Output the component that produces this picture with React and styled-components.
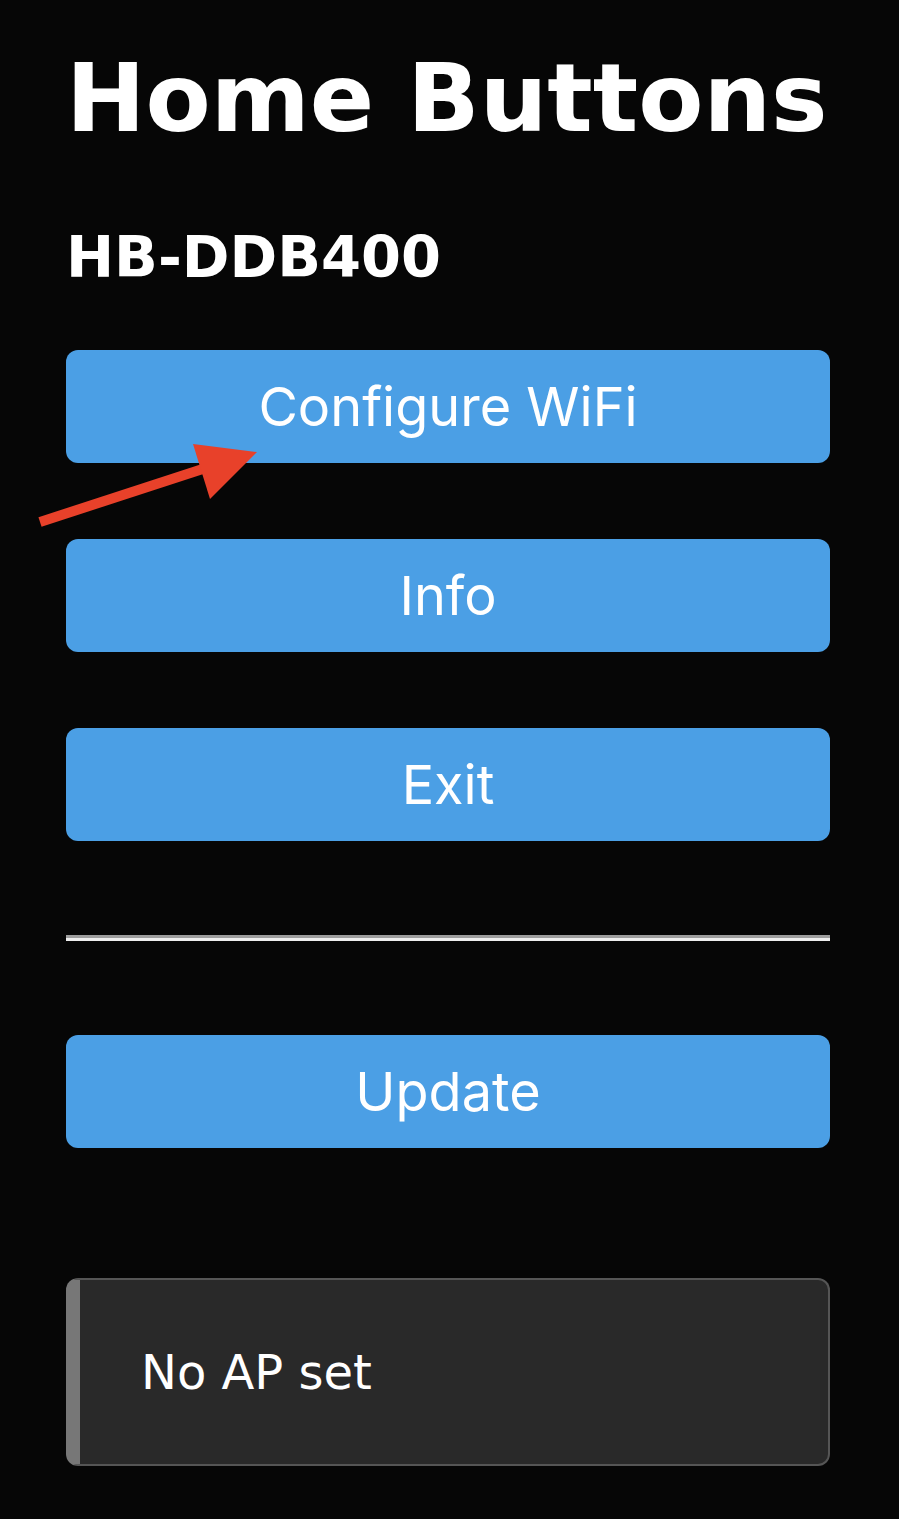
import React from "react";
import styled, { createGlobalStyle } from "styled-components";

const Global = createGlobalStyle`
  html, body { margin: 0; padding: 0; background: #060606; }
  body { font-family: "DejaVu Sans", sans-serif; color: #fff; }
`;

const Page = styled.div`
  position: relative;
  min-height: 1519px;
  padding: 38px 69px 0 66px;
  box-sizing: border-box;
  display: flex;
  flex-direction: column;
`;

const Title = styled.h1`
  margin: 0;
  font-family: "DejaVu Sans", sans-serif;
  font-weight: bold;
  font-size: 95px;
  line-height: 120px;
  white-space: nowrap;
`;

const Subtitle = styled.h2`
  margin: 70px 0 0 0;
  font-family: "DejaVu Sans", sans-serif;
  font-weight: bold;
  font-size: 57.5px;
  line-height: 60px;
`;

const Stack = styled.div`
  display: flex;
  flex-direction: column;
  gap: 76px;
  margin-top: ${(p) => p.$top}px;
`;

const Button = styled.button`
  display: flex;
  align-items: center;
  justify-content: center;
  height: 113px;
  width: 100%;
  border: none;
  border-radius: 12px;
  background: #4b9fe5;
  color: #fff;
  font-family: Inter, "Open Sans", sans-serif;
  font-size: 54px;
  font-weight: 400;
  padding: 0;
`;

const Rule = styled.hr`
  margin: 94px 0 0 0;
  height: 0;
  border-top: 3px solid #9d9d9d;
  border-bottom: 3px solid #ededed;
  border-left: none;
  border-right: none;
`;

const Message = styled.div`
  margin-top: 130px;
  height: 188px;
  box-sizing: border-box;
  background: #292929;
  border: 2px solid #555;
  border-left: 14px solid #777;
  border-radius: 12px;
  display: flex;
  align-items: center;
  padding-left: 61px;
  font-family: "DejaVu Sans", sans-serif;
  font-size: 48px;
`;

const Arrow = styled.svg`
  position: absolute;
  left: 0;
  top: 0;
  pointer-events: none;
`;

export default function App() {
  return (
    <>
      <Global />
      <Page>
        <Title>Home Buttons</Title>
        <Subtitle>HB-DDB400</Subtitle>
        <Stack $top={62}>
          <Button>Configure WiFi</Button>
          <Button>Info</Button>
          <Button>Exit</Button>
        </Stack>
        <Rule />
        <Stack $top={94}>
          <Button>Update</Button>
        </Stack>
        <Message>No AP set</Message>
        <Arrow width="300" height="560" viewBox="0 0 300 560">
          <line x1="40" y1="522" x2="218" y2="464" stroke="#e8412a" strokeWidth="10" />
          <polygon points="193,444 257,452 210,499" fill="#e8412a" />
        </Arrow>
      </Page>
    </>
  );
}
